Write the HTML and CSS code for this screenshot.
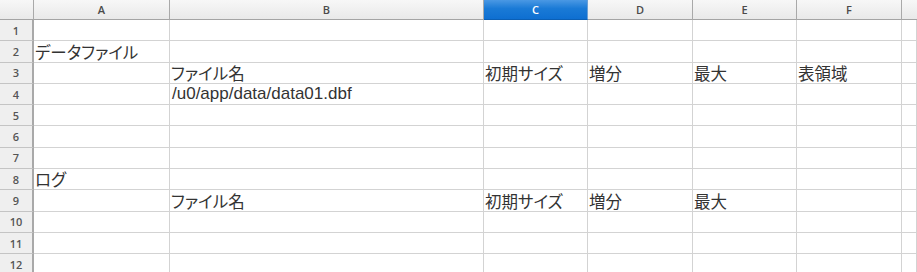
FILE: index.html
```html
<!DOCTYPE html>
<html lang="ja">
<head>
  <meta charset="UTF-8" />
  <title>Sheet1</title>
  <link rel="stylesheet" href="styles.css">
</head>
<body>
  <div class="sheet">
    <!-- column headers -->
    <div class="ch corner"></div>
    <div class="ch">A</div>
    <div class="ch">B</div>
    <div class="ch sel">C</div>
    <div class="ch">D</div>
    <div class="ch">E</div>
    <div class="ch">F</div>
    <div class="ch last"></div>

    <div class="rh">1</div>
    <div class="c"></div><div class="c"></div><div class="c"></div><div class="c"></div><div class="c"></div><div class="c"></div><div class="c"></div>

    <div class="rh">2</div>
    <div class="c">データファイル</div><div class="c"></div><div class="c"></div><div class="c"></div><div class="c"></div><div class="c"></div><div class="c"></div>

    <div class="rh">3</div>
    <div class="c"></div><div class="c">ファイル名</div><div class="c">初期サイズ</div><div class="c">増分</div><div class="c">最大</div><div class="c">表領域</div><div class="c"></div>

    <div class="rh">4</div>
    <div class="c"></div><div class="c path">/u0/app/data/data01.dbf</div><div class="c"></div><div class="c"></div><div class="c"></div><div class="c"></div><div class="c"></div>

    <div class="rh">5</div>
    <div class="c"></div><div class="c"></div><div class="c"></div><div class="c"></div><div class="c"></div><div class="c"></div><div class="c"></div>

    <div class="rh">6</div>
    <div class="c"></div><div class="c"></div><div class="c"></div><div class="c"></div><div class="c"></div><div class="c"></div><div class="c"></div>

    <div class="rh">7</div>
    <div class="c"></div><div class="c"></div><div class="c"></div><div class="c"></div><div class="c"></div><div class="c"></div><div class="c"></div>

    <div class="rh">8</div>
    <div class="c">ログ</div><div class="c"></div><div class="c"></div><div class="c"></div><div class="c"></div><div class="c"></div><div class="c"></div>

    <div class="rh">9</div>
    <div class="c"></div><div class="c">ファイル名</div><div class="c">初期サイズ</div><div class="c">増分</div><div class="c">最大</div><div class="c"></div><div class="c"></div>

    <div class="rh">10</div>
    <div class="c"></div><div class="c"></div><div class="c"></div><div class="c"></div><div class="c"></div><div class="c"></div><div class="c"></div>

    <div class="rh">11</div>
    <div class="c"></div><div class="c"></div><div class="c"></div><div class="c"></div><div class="c"></div><div class="c"></div><div class="c"></div>

    <div class="rh">12</div>
    <div class="c"></div><div class="c"></div><div class="c"></div><div class="c"></div><div class="c"></div><div class="c"></div><div class="c"></div>
  </div>
</body>
</html>
```

FILE: styles.css
```css
body {
  margin: 0;
  background: #fff;
  overflow: hidden;
}
.sheet {
  display: grid;
  grid-template-columns: 34px 136px 314px 104px 105px 104px 105px 1fr;
  grid-template-rows: 20px;
  grid-auto-rows: 21.3px;
  font-family: "Noto Sans CJK JP", "Liberation Sans", sans-serif;
}
/* column header strip */
.ch {
  box-sizing: border-box;
  background: linear-gradient(#f7f7f7, #e9e9e9);
  border-right: 1px solid #a9a9a9;
  border-bottom: 1px solid #a4a4a4;
  color: #4a4a4a;
  font-family: "Open Sans", "Liberation Sans", sans-serif;
  font-size: 11px;
  font-weight: 600;
  display: flex;
  align-items: center;
  justify-content: center;
}
.ch.sel {
  background: linear-gradient(#4a98e4, #1a7ad6 45%, #0e6fd1);
  border-bottom-color: #0b5fb5;
  border-right-color: #6a9fd5;
  color: #fff;
}
.ch.last {
  border-right: none;
}
/* row numbers */
.rh {
  box-sizing: border-box;
  background: #efefef;
  border-right: 2px solid #a9a9a9;
  border-bottom: 1px solid #c4c4c4;
  color: #555;
  font-family: "Open Sans", "Liberation Sans", sans-serif;
  font-size: 11px;
  font-weight: 600;
  display: flex;
  align-items: center;
  justify-content: center;
}
/* cells */
.c {
  box-sizing: border-box;
  border-right: 1px solid #d3d3d3;
  border-bottom: 1px solid #d3d3d3;
  padding: 0 0 0 1px;
  color: #333;
  font-size: 16.5px;
  font-feature-settings: "palt";
  line-height: 20px;
  white-space: nowrap;
  overflow: visible;
  display: flex;
  align-items: flex-end;
}
.c.path {
  font-family: "Liberation Sans", sans-serif;
  font-size: 17px;
  padding-left: 2px;
}
```
